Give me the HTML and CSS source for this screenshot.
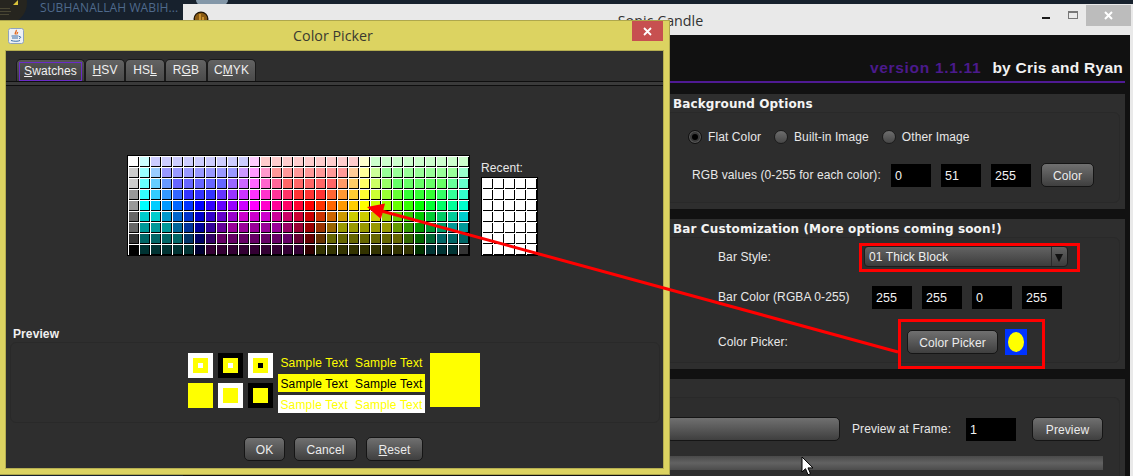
FILE: index.html
```html
<!DOCTYPE html>
<html lang="en">
<head>
<meta charset="utf-8">
<title>Sonic Candle - Color Picker</title>
<link rel="stylesheet" href="styles.css">
</head>
<body>
<div class="desktop">
  <div class="taskstrip">
    <svg class="thumb" width="28" height="20" viewBox="0 0 28 20"><circle cx="6" cy="3" r="21" fill="#26251f"/><path d="M13 5l5-5v5z" fill="#d8c23a"/><path d="M0 8h10v1H0zM0 11h11v1H0zM0 14h9v1H0z" fill="#4a4734"/></svg>
    <span class="tasklabel">SUBHANALLAH WABIH...</span>
    <span class="taskpill"></span>
  </div>

  <section class="mainwin">
    <header class="maintitle">
      <svg class="appicon" width="16" height="16" viewBox="0 0 16 16"><circle cx="8" cy="8" r="7.5" fill="#1c1206"/><circle cx="8" cy="8" r="6.2" fill="#8a5a12"/><path d="M6 3h2v11H6zM9 6h2v8H9z" fill="#c9912f"/></svg>
      <span class="maintext">Sonic Candle</span>
      <div class="wincontrols">
        <span class="ctl-min"></span>
        <span class="ctl-max"></span>
        <span class="ctl-close"><svg width="11" height="11" viewBox="0 0 11 11"><path d="M2 2l7 7M9 2l-7 7" stroke="#fff" stroke-width="2"/></svg></span>
      </div>
    </header>
    <div class="client">
      <div class="versionbar"><span class="version">version 1.1.11</span><span class="authors">by Cris and Ryan</span></div>

      <div class="section">
        <h2 class="sechead">Background Options</h2>
        <div class="inner inner-bg">
          <div class="radios">
            <label class="radio"><span class="dot dot-on"></span>Flat Color</label>
            <label class="radio"><span class="dot"></span>Built-in Image</label>
            <label class="radio"><span class="dot"></span>Other Image</label>
          </div>
          <div class="row row-rgb">
            <span class="lbl lbl-rgb">RGB values (0-255 for each color):</span>
            <span class="field">0</span><span class="field">51</span><span class="field">255</span>
            <button class="btn btn-color">Color</button>
          </div>
        </div>
      </div>

      <div class="section">
        <h2 class="sechead">Bar Customization (More options coming soon!)</h2>
        <div class="inner inner-bar">
          <div class="row">
            <span class="lbl lbl-style">Bar Style:</span>
            <div class="combo"><span class="combotext">01 Thick Block</span><span class="comboarrow"></span></div>
          </div>
          <div class="row row-rgba">
            <span class="lbl lbl-rgba">Bar Color (RGBA 0-255)</span>
            <span class="field">255</span><span class="field">255</span><span class="field">0</span><span class="field">255</span>
          </div>
          <div class="row row-picker">
            <span class="lbl lbl-picker">Color Picker:</span>
            <button class="btn btn-picker">Color Picker</button>
            <span class="barpreview"><span class="baroval"></span></span>
          </div>
        </div>
      </div>

      <div class="section section-last">
        <div class="sechead"></div>
        <div class="inner inner-prev">
          <div class="row">
            <button class="btn btn-wide"></button>
            <span class="lbl lbl-frame">Preview at Frame:</span>
            <span class="field field-frame">1</span>
            <button class="btn btn-preview">Preview</button>
          </div>
          <div class="progress"></div>
        </div>
      </div>
    </div>
  </section>

  <section class="dialog">
    <header class="dlgtitle">
      <svg class="javaicon" width="16" height="16" viewBox="0 0 16 16"><rect x=".5" y=".5" width="15" height="15" rx="2" fill="#eef1f5" stroke="#8fa3bd"/><path d="M8 2c1.5 1.5-2 2.5-.5 4.500M9.500 4c.5 1-1 1.500-.5 2.500" stroke="#e2671c" stroke-width="1.300" fill="none"/><path d="M3.500 8h7M4 10h6M3 12.500c3 1 7 1 9 0M11 8.500c2-.5 2.500 1.500 0 2" stroke="#3a6ea8" stroke-width="1" fill="none"/></svg>
      <span class="dlgtext">Color Picker</span>
      <span class="dlgclose"><svg width="11" height="11" viewBox="0 0 11 11"><path d="M2 2l7 7M9 2l-7 7" stroke="#fff" stroke-width="1.800"/></svg></span>
    </header>
    <div class="dlgclient">
      <div class="tabs">
        <div class="tab tab-on"><span class="focus"><u>S</u>watches</span></div>
        <div class="tab tab-hsv"><u>H</u>SV</div>
        <div class="tab tab-hsl">HS<u>L</u></div>
        <div class="tab tab-rgb">R<u>G</u>B</div>
        <div class="tab tab-cmyk">C<u>M</u>YK</div>
      </div>
      <div class="tabband"></div>
      <div class="swatcharea">
        <div class="swatches" id="main-swatches"></div>
        <div class="recent">
          <span class="recentlabel">Recent:</span>
          <div class="swatches" id="recent-swatches"></div>
        </div>
      </div>
      <h3 class="prevhead">Preview</h3>
      <div class="prevpanel">
        <div class="squares">
          <span class="sq sq-white"><span class="sq-mid"><span class="sq-core"></span></span></span>
          <span class="sq sq-black"><span class="sq-mid"><span class="sq-core"></span></span></span>
          <span class="sq sq-white"><span class="sq-mid"><span class="sq-core sq-core-dark"></span></span></span>
          <span class="sq sq-yellow"></span>
          <span class="sq sq-white"><span class="sq-mid"></span></span>
          <span class="sq sq-black"><span class="sq-mid"></span></span>
        </div>
        <div class="samples">
          <div class="sample s-plain"><span>Sample Text</span><span>Sample Text</span></div>
          <div class="sample s-yellow"><span>Sample Text</span><span>Sample Text</span></div>
          <div class="sample s-white"><span>Sample Text</span><span>Sample Text</span></div>
        </div>
        <div class="bigswatch"></div>
      </div>
      <div class="dlgbuttons">
        <button class="btn btn-ok">OK</button>
        <button class="btn btn-cancel">Cancel</button>
        <button class="btn btn-reset"><u>R</u>eset</button>
      </div>
    </div>
  </section>

  <div class="callout callout-combo"></div>
  <div class="callout callout-picker"></div>
  <svg class="arrow" width="1133" height="476" viewBox="0 0 1133 476">
    <path d="M898 352L378 210" stroke="#f00" stroke-width="3" fill="none"/>
    <path d="M367 207L385 203.500L381 219z" fill="#f00"/>
  </svg>
  <svg class="cursor" width="13" height="20" viewBox="0 0 13 20"><path d="M1 1v15l3.500-3.300 2.500 6 2.500-1-2.500-5.800h5z" fill="#fff" stroke="#000" stroke-width="1"/></svg>
</div>
<script src="swatches.js"></script>
</body>
</html>
```
FILE: styles.css
```css
* { box-sizing: border-box; }
html, body { margin: 0; padding: 0; height: 100%; overflow: hidden; }
body { background: #17212d; font: 12px "Liberation Sans", Arial, sans-serif; letter-spacing: .1px; color: #e8e8e8; }
h2, h3 { margin: 0; }
button { font: inherit; letter-spacing: inherit; padding: 1px 0 0; }

.desktop { position: relative; width: 1133px; height: 476px; overflow: hidden; }

/* desktop behind the windows */
.taskstrip { height: 20px; display: flex; align-items: flex-start; position: relative; }
.thumb { flex: none; margin-right: 12px; }
.tasklabel { font: 12px/15px "Open Sans", sans-serif; color: #4f6a8c; white-space: nowrap; width: 143px; overflow: hidden; }
.taskpill { width: 32px; height: 5px; border-radius: 0 0 10px 10px; background: #8397a8; margin-left: 13px; flex: none; }

/* main window */
.mainwin { position: absolute; left: 183px; top: 4px; width: 950px; height: 472px; background: #e9e9e9; display: flex; flex-direction: column; }
.maintitle { height: 31px; flex: none; display: grid; grid-template-columns: 1fr auto 1fr; align-items: start; }
.appicon { margin: 7px 0 0 10px; }
.maintext { font: 14.300px/34px "Open Sans", sans-serif; letter-spacing: 0; color: #333; padding-left: 5px; }
.wincontrols { display: flex; justify-content: flex-end; align-items: flex-start; padding-right: 2px; }
.ctl-min { width: 8px; height: 2px; background: #1a1a1a; margin: 13px 18px 0 0; }
.ctl-max { width: 10px; height: 8px; border: 1px solid #777; border-top-width: 2px; margin: 7px 8px 0 0; }
.ctl-close { width: 45px; height: 21px; margin-top: 1px; background: #bcbcbc; display: flex; align-items: center; justify-content: center; }

.client { flex: 1; margin-right: 3px; background: #111; display: flex; flex-direction: column; align-items: flex-end; padding-right: 5px; }
.versionbar { width: 465px; height: 48px; border-bottom: 2px solid #4f1a94; display: flex; justify-content: flex-end; align-items: flex-end; gap: 11px; padding: 0 2px 3px 0; font: bold 15.500px/20px "Liberation Sans", sans-serif; }
.version { color: #4b1a8c; letter-spacing: .7px; }
.authors { color: #f2f2f2; letter-spacing: .25px; }

.section { width: 465px; background: #2e2e2e; margin-top: 10px; padding: 0 5px 6px; }
.versionbar + .section { margin-top: 11px; }
.section-last { flex: 1; padding-bottom: 0; }
.sechead { height: 18px; padding-left: 8px; font: bold 12px/20px "DejaVu Sans", sans-serif; letter-spacing: .12px; color: #f4f4f4; white-space: nowrap; }
.inner { border: 1px solid #292929; border-radius: 6px; background: #2d2d2d; }
.inner-bg { height: 91px; padding: 14px 0 0 22px; }
.inner-bar { height: 126px; padding: 8px 0 0 52px; }
.inner-prev { height: 100px; padding-top: 19px; border-bottom: 0; border-radius: 6px 6px 0 0; }

.radios { display: flex; gap: 13px; height: 20px; align-items: center; }
.radio { display: flex; align-items: center; gap: 6px; color: #e8e8e8; }
.dot { width: 14px; height: 14px; border-radius: 50%; border: 1px solid #1c1c1c; background: linear-gradient(#6e6e6e, #474747); display: flex; align-items: center; justify-content: center; }
.dot-on { background: #383838; border-color: #111; box-shadow: inset 0 0 0 1px #5a5a5a; }
.dot-on::before { content: ""; width: 6px; height: 6px; border-radius: 50%; background: #000; }

.row { display: flex; align-items: center; }
.row-rgb { margin: 16px 0 0 4px; }
.row-rgba { margin-top: 19px; }
.row-picker { margin-top: 20px; }
.lbl { color: #e8e8e8; white-space: nowrap; flex: none; }
.lbl-rgb { width: 199px; }
.lbl-style { width: 146px; }
.lbl-rgba { width: 154px; padding-bottom: 2px; }
.lbl-picker { width: 189px; }
.lbl-frame { width: 114px; margin-left: 12px; }

.field { width: 40px; height: 23px; flex: none; background: #000; color: #f2f2f2; line-height: 24px; padding-left: 4px; margin-right: 10px; font-size: 12.500px; }
.field-frame { width: 50px; margin-right: 16px; }

.btn { flex: none; height: 24px; border: 1px solid #151515; border-radius: 5px; background: linear-gradient(#707070, #3f3f3f); color: #ececec; text-align: center; }
.btn-color { width: 53px; }
.btn-picker { width: 91px; }
.btn-wide { width: 174px; }
.btn-preview { width: 71px; }
.btn-ok { width: 41px; }
.btn-cancel { width: 63px; }
.btn-reset { width: 57px; }

.combo { width: 204px; height: 21px; border: 1px solid #1c1c1c; border-radius: 4px; background: linear-gradient(#636363, #3c3c3c); display: flex; align-items: stretch; }
.combotext { flex: 1; line-height: 20px; padding-left: 4px; color: #f0f0f0; }
.comboarrow { width: 16px; border-left: 1px solid #2a2a2a; position: relative; }
.comboarrow::after { content: ""; position: absolute; left: 3px; top: 7px; border-left: 4.500px solid transparent; border-right: 4.500px solid transparent; border-top: 8px solid #111; }

.barpreview { width: 22px; height: 26px; margin-left: 7px; background: #0033ff; display: flex; align-items: center; justify-content: center; }
.baroval { width: 16px; height: 20px; border-radius: 50%; background: #ff0; }

.progress { width: 437px; height: 14px; margin-top: 15px; background: linear-gradient(#4a4a4a, #626262 50%, #4c4c4c); }

/* dialog */
.dialog { position: absolute; left: 0; top: 20px; width: 670px; height: 455px; background: #dcd361; border: solid #aea74c; border-width: 1px 1px 1px 0; display: flex; flex-direction: column; }
.dlgtitle { height: 30px; flex: none; display: grid; grid-template-columns: 1fr auto 1fr; align-items: start; position: relative; }
.javaicon { margin: 7px 0 0 8px; }
.dlgtext { font: 14.300px/30px "Open Sans", sans-serif; letter-spacing: 0; color: #3a3a30; padding-right: 3px; }
.dlgclose { justify-self: end; width: 31px; height: 20px; margin-right: 6px; background: #c75050; display: flex; align-items: center; justify-content: center; }

.dlgclient { height: 417px; margin: 0 6px; background: #2e2e2e; outline: 1px solid #b5ae50; color: #e8e8e8; }
.tabs { display: flex; padding: 8px 0 0 10px; height: 30px; }
.tab { height: 22px; border: 1px solid #1a1a1a; border-bottom: 0; border-radius: 5px 5px 0 0; background: linear-gradient(#636363, #4a4a4a); color: #f0f0f0; line-height: 21px; text-align: center; }
.tab-on { width: 69px; padding: 2px 2px 0; background: linear-gradient(#555, #3a3a3a); }
.tab-hsv { width: 40px; }
.tab-hsl { width: 40px; }
.tab-rgb { width: 42px; }
.tab-cmyk { width: 49px; }
.focus { display: block; height: 19px; border: 1px solid #6a2bc8; line-height: 17px; }
.tabband { height: 5px; background: #3a3a3a; border: solid #0e0e0e; border-width: 1px 0; }

.swatcharea { display: flex; align-items: flex-end; gap: 11px; padding-left: 121px; margin-top: 68px; height: 102px; }
.swatches { display: grid; gap: 1px; background: #fff; border: 1px solid #000; padding: 1px 0 0 1px; }
#main-swatches { grid-template-columns: repeat(31, 10px); grid-auto-rows: 10px; }
#recent-swatches { grid-template-columns: repeat(5, 10px); grid-auto-rows: 10px; }
.cell { border-right: 1px solid #000; border-bottom: 1px solid #000; }
.recent { display: flex; flex-direction: column; }
.recentlabel { line-height: 15px; margin-bottom: 1px; }

.prevhead { margin-top: 70px; height: 14px; padding-left: 7px; font: bold 12px/16px "Liberation Sans", sans-serif; color: #f0f0f0; }
.prevpanel { height: 81px; margin: 2px 3px 0 4px; border: 1px solid #292929; border-radius: 6px; padding: 10px 0 0 177px; display: flex; gap: 5px; align-items: flex-start; }
.squares { display: grid; grid-template-columns: repeat(3, 25px); grid-auto-rows: 25px; gap: 5px; }
.sq { display: flex; align-items: center; justify-content: center; }
.sq-white { background: #fff; }
.sq-black { background: #000; }
.sq-yellow { background: #ff0; }
.sq-mid { width: 15px; height: 15px; background: #ff0; display: flex; align-items: center; justify-content: center; }
.sq-core { width: 5px; height: 5px; background: #fff; }
.sq-core-dark { background: #000; }
.samples { width: 147px; display: flex; flex-direction: column; gap: 3px; }
.sample { height: 18px; display: flex; justify-content: center; gap: 7px; line-height: 21px; letter-spacing: .16px; color: #ff0; overflow: hidden; }
.s-yellow { background: #ff0; color: #000; }
.s-white { background: #fff; }
.bigswatch { width: 50px; height: 54px; background: #ff0; }

.dlgbuttons { display: flex; justify-content: center; gap: 9px; margin-top: 14px; padding-right: 2px; }

/* annotations lying over everything */
.callout { position: absolute; border: 3px solid #f00; }
.callout-combo { left: 859px; top: 243px; width: 221px; height: 29px; }
.callout-picker { left: 898px; top: 319px; width: 147px; height: 50px; }
.arrow { position: absolute; left: 0; top: 0; pointer-events: none; }
.cursor { position: absolute; left: 801px; top: 456px; }
```
FILE: swatches.js
```js
(function () {
  var hex = function (n) { return ('0' + n.toString(16)).slice(-2); };
  var stops = [[0,255,255],[0,0,255],[255,0,255],[255,0,0],[255,255,0],[0,255,0]];
  var hues = [];
  for (var s = 0; s < 5; s++) {
    for (var k = 0; k < 5; k++) {
      var a = stops[s], b = stops[s + 1], t = k * 51;
      hues.push(a.map(function (v, i) {
        return v === b[i] ? v : (v > b[i] ? 255 - t : t);
      }));
    }
  }
  hues.push([0, 255, 0]);
  for (var e = 0; e < 4; e++) hues.push([0, 255, 51 * (e + 1)]);
  hues = hues.slice(0, 30);

  var greys = ['ffffff','cccccc','cccccc','999999','999999','666666','666666','333333','000000'];
  var tints = [204, 153, 102, 51, 0];
  var shades = [204, 153, 102, 51];
  var main = document.getElementById('main-swatches');
  var add = function (parent, colour) {
    var c = document.createElement('div');
    c.className = 'cell';
    c.style.backgroundColor = colour;
    parent.appendChild(c);
  };
  for (var r = 0; r < 9; r++) {
    add(main, '#' + greys[r]);
    for (var h = 0; h < 30; h++) {
      var col = hues[h].map(function (v) {
        return r < 5 ? Math.max(v, tints[r]) : Math.min(v, shades[r - 5]);
      });
      if (r === 8 && h === 29) col = [51, 51, 51];
      add(main, '#' + col.map(hex).join(''));
    }
  }
  var recent = document.getElementById('recent-swatches');
  for (var i = 0; i < 35; i++) add(recent, '#ffffff');
})();
```
